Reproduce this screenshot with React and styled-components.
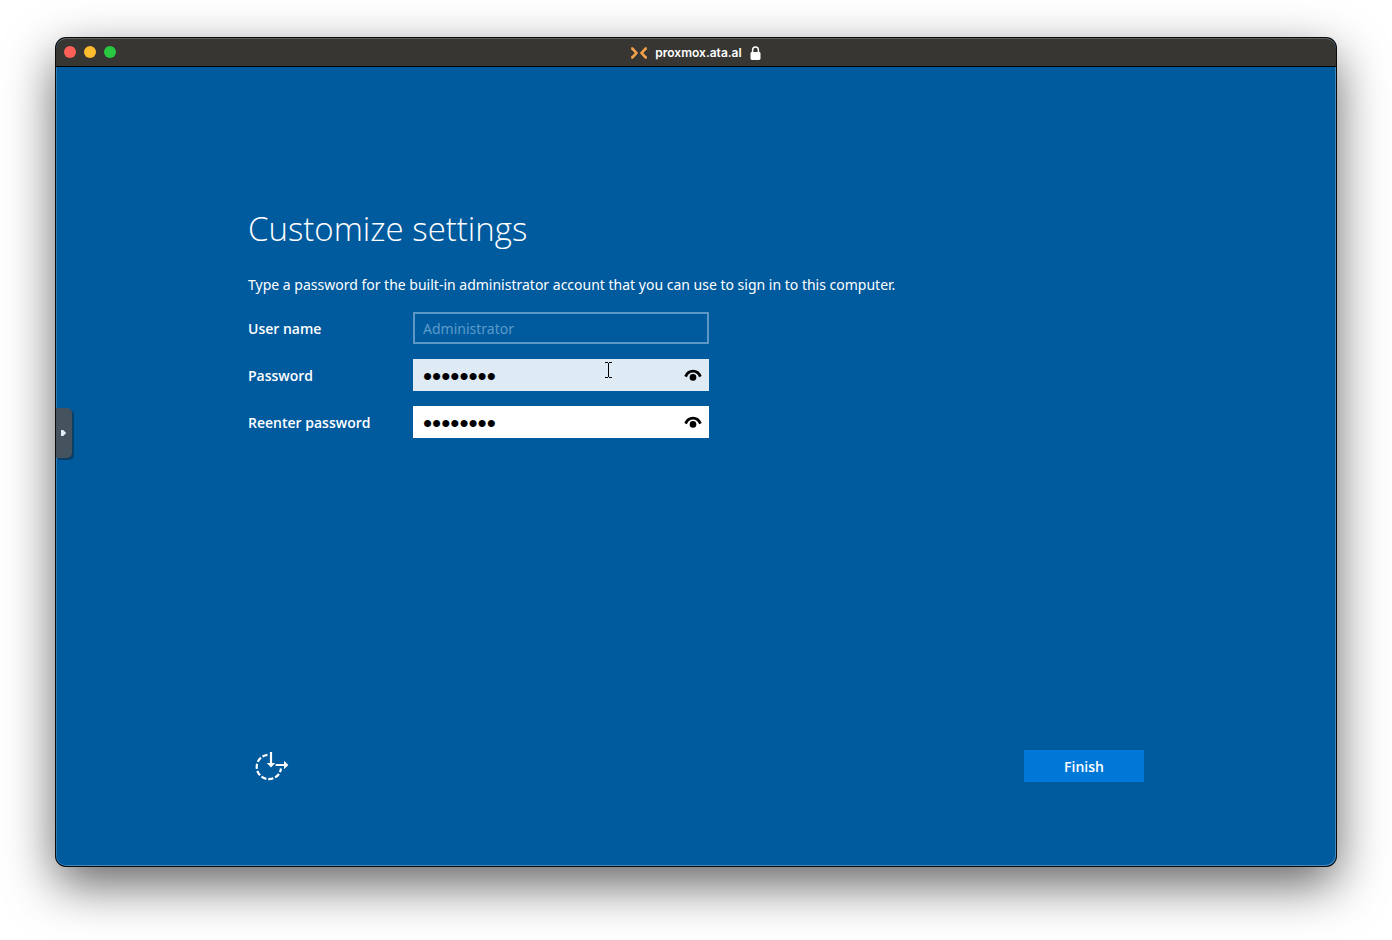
import styled, { createGlobalStyle } from "styled-components";

const GlobalStyle = createGlobalStyle`
  * {
    box-sizing: border-box;
  }

  body {
    margin: 0;
    background: #ffffff;
    font-family: "Noto Sans", "Open Sans", sans-serif;
    font-size: 14px;
  }
`;

const Desktop = styled.div`
  display: flex;
  min-height: 100vh;
  padding: 38px 56px 74px;
`;

const Window = styled.div`
  display: flex;
  flex: 1;
  flex-direction: column;
  overflow: hidden;
  border-radius: 10px;
  background: #005a9e;
  box-shadow:
    0 0 0 1px #0a0a0a,
    0 18px 50px rgba(0, 0, 0, 0.62);
`;

const TitleBar = styled.header`
  display: grid;
  grid-template-columns: 1fr auto 1fr;
  align-items: center;
  height: 29px;
  padding: 0 8px;
  border-bottom: 1px solid #000000;
  border-radius: 10px 10px 0 0;
  background: #373632;
  box-shadow: inset 0 1px 0 #62615e;
`;

const Lights = styled.div`
  display: flex;
  gap: 8px;
`;

const Light = styled.button`
  width: 12px;
  height: 12px;
  padding: 0;
  border: none;
  border-radius: 50%;
  background: ${(props) => props.$color};
`;

const Address = styled.div`
  display: flex;
  align-items: center;
  padding-top: 1px;
  color: #ffffff;
  font-family: Inter, "Liberation Sans", sans-serif;
  font-size: 12px;
  font-weight: 600;
  gap: 8px;
`;

const Screen = styled.main`
  position: relative;
  display: flex;
  flex: 1;
  flex-direction: column;
  justify-content: space-between;
  padding: 136px 15% 84px;
  color: #ffffff;
  box-shadow:
    inset 1px 0 0 #2f78b2,
    inset -1px -1px 0 #4389bd;
  border-radius: 0 0 10px 10px;
`;

const PanelHandle = styled.button`
  position: absolute;
  top: 341px;
  left: 0;
  display: flex;
  align-items: center;
  width: 16px;
  height: 50px;
  padding: 0 0 0 5px;
  border: none;
  border-radius: 0 5px 5px 0;
  background: #45535f;
  box-shadow: 2px 2px 0 #093f69;
`;

const Title = styled.h1`
  margin: 0;
  font-family: "Open Sans", "Noto Sans", sans-serif;
  font-size: 33px;
  font-weight: 300;
  line-height: 52px;
`;

const Intro = styled.p`
  margin: 18px 0 15px;
  line-height: 24px;
`;

const Form = styled.form`
  display: grid;
  gap: 15px;
`;

const Row = styled.div`
  display: grid;
  grid-template-columns: 165px minmax(0, 296px);
  align-items: center;
`;

const Label = styled.label`
  font-family: "Open Sans", "Noto Sans", sans-serif;
  font-weight: 600;
`;

const Field = styled.div`
  position: relative;
  display: flex;
  align-items: center;
  height: 32px;
  padding: 0 7px 0 0;
  background: ${(props) => (props.$hovered ? "#deebf4" : "#ffffff")};
`;

const NameInput = styled.input`
  width: 100%;
  height: 32px;
  padding: 0 8px;
  border: 2px solid #5c98c6;
  background: transparent;
  color: #5c9acb;
  font: inherit;
`;

const PasswordInput = styled.input`
  flex: 1;
  min-width: 0;
  height: 32px;
  padding: 3px 10px 0;
  border: none;
  outline: none;
  background: transparent;
  color: #000000;
  font-family: "Liberation Sans", sans-serif;
  font-size: 26px;
`;

const RevealButton = styled.button`
  display: flex;
  padding: 0;
  border: none;
  background: none;
`;

const TextCursor = styled.svg`
  position: absolute;
  top: 3px;
  left: 65%;
  width: 7px;
  height: 16px;
`;

const Footer = styled.footer`
  display: flex;
  align-items: center;
  justify-content: space-between;
`;

const AccessButton = styled.button`
  display: flex;
  padding: 0 0 0 7px;
  border: none;
  background: none;
`;

const FinishButton = styled.button`
  width: 120px;
  height: 32px;
  border: none;
  background: #0078d7;
  color: #ffffff;
  font: 600 14px "Open Sans", "Noto Sans", sans-serif;
`;

function ProxmoxIcon() {
  return (
    <svg width="16" height="12" viewBox="0 0 16 12" aria-hidden="true">
      <g fill="none" stroke="#f5a04a" strokeWidth="2.6">
        <path d="M0.2 1.6H1.4L5.4 6L1.4 10.4H0.2" />
        <path d="M15.8 1.6H14.6L10.6 6L14.6 10.4H15.8" />
      </g>
    </svg>
  );
}

function LockIcon() {
  return (
    <svg width="11" height="14" viewBox="0 0 11 14" aria-hidden="true">
      <rect x="0.5" y="6" width="10" height="8" rx="1.4" fill="#ffffff" />
      <path
        d="M2.6 6.5V4C2.6 2.1 3.8 0.9 5.5 0.9S8.4 2.1 8.4 4V6.5"
        fill="none"
        stroke="#ffffff"
        strokeWidth="1.5"
      />
    </svg>
  );
}

function EyeIcon() {
  return (
    <svg width="18" height="12" viewBox="0 0 18 12" aria-hidden="true">
      <path
        d="M1.6 7.6C3 4.2 5.6 2.2 9 2.2S15 4.2 16.4 7.6"
        fill="none"
        stroke="#000000"
        strokeWidth="2.8"
      />
      <circle cx="9" cy="8.4" r="3.3" />
    </svg>
  );
}

function EaseOfAccessIcon() {
  return (
    <svg width="34" height="30" viewBox="0 0 34 30" aria-hidden="true">
      <g fill="none" stroke="#ffffff" strokeWidth="2.2">
        <path
          d="M12.5 3.8A12.2 12.2 0 1 0 26 17.5"
          strokeDasharray="5.3 1.9"
        />
        <path d="M16 1V13M20.6 14H31" />
      </g>
      <path
        d="M11.8 12H20.2L16 16.6ZM29 9.8L33.4 14L29 18.2Z"
        fill="#ffffff"
      />
    </svg>
  );
}

function PasswordRow({ id, label, hovered }) {
  return (
    <Row>
      <Label htmlFor={id}>{label}</Label>
      <Field $hovered={hovered}>
        <PasswordInput id={id} type="password" defaultValue="password" />
        <RevealButton type="button" aria-label={`Show ${label}`}>
          <EyeIcon />
        </RevealButton>
        {hovered && (
          <TextCursor viewBox="0 0 7 16" aria-hidden="true">
            <path
              d="M0 0.5H3M4 0.5H7M3.5 1V15M0 15.5H3M4 15.5H7"
              fill="none"
              stroke="#000000"
            />
          </TextCursor>
        )}
      </Field>
    </Row>
  );
}

export default function App() {
  return (
    <>
      <GlobalStyle />
      <Desktop>
        <Window>
          <TitleBar>
            <Lights>
              <Light $color="#ff5f57" aria-label="Close" />
              <Light $color="#febc2e" aria-label="Minimize" />
              <Light $color="#28c840" aria-label="Zoom" />
            </Lights>
            <Address>
              <ProxmoxIcon />
              <span>proxmox.ata.al</span>
              <LockIcon />
            </Address>
          </TitleBar>
          <Screen>
            <PanelHandle aria-label="Open control panel">
              <svg width="6" height="8" viewBox="0 0 6 8" aria-hidden="true">
                <path d="M0 1H2.2L5.2 4L2.2 7H0Z" fill="#e4eef6" />
              </svg>
            </PanelHandle>
            <section>
              <Title>Customize settings</Title>
              <Intro>
                Type a password for the built-in administrator account that you
                can use to sign in to this computer.
              </Intro>
              <Form id="settings" onSubmit={(e) => e.preventDefault()}>
                <Row>
                  <Label htmlFor="user">User name</Label>
                  <NameInput id="user" value="Administrator" disabled />
                </Row>
                <PasswordRow id="password" label="Password" hovered />
                <PasswordRow id="reenter" label="Reenter password" />
              </Form>
            </section>
            <Footer>
              <AccessButton type="button" aria-label="Ease of access">
                <EaseOfAccessIcon />
              </AccessButton>
              <FinishButton type="submit" form="settings">
                Finish
              </FinishButton>
            </Footer>
          </Screen>
        </Window>
      </Desktop>
    </>
  );
}
